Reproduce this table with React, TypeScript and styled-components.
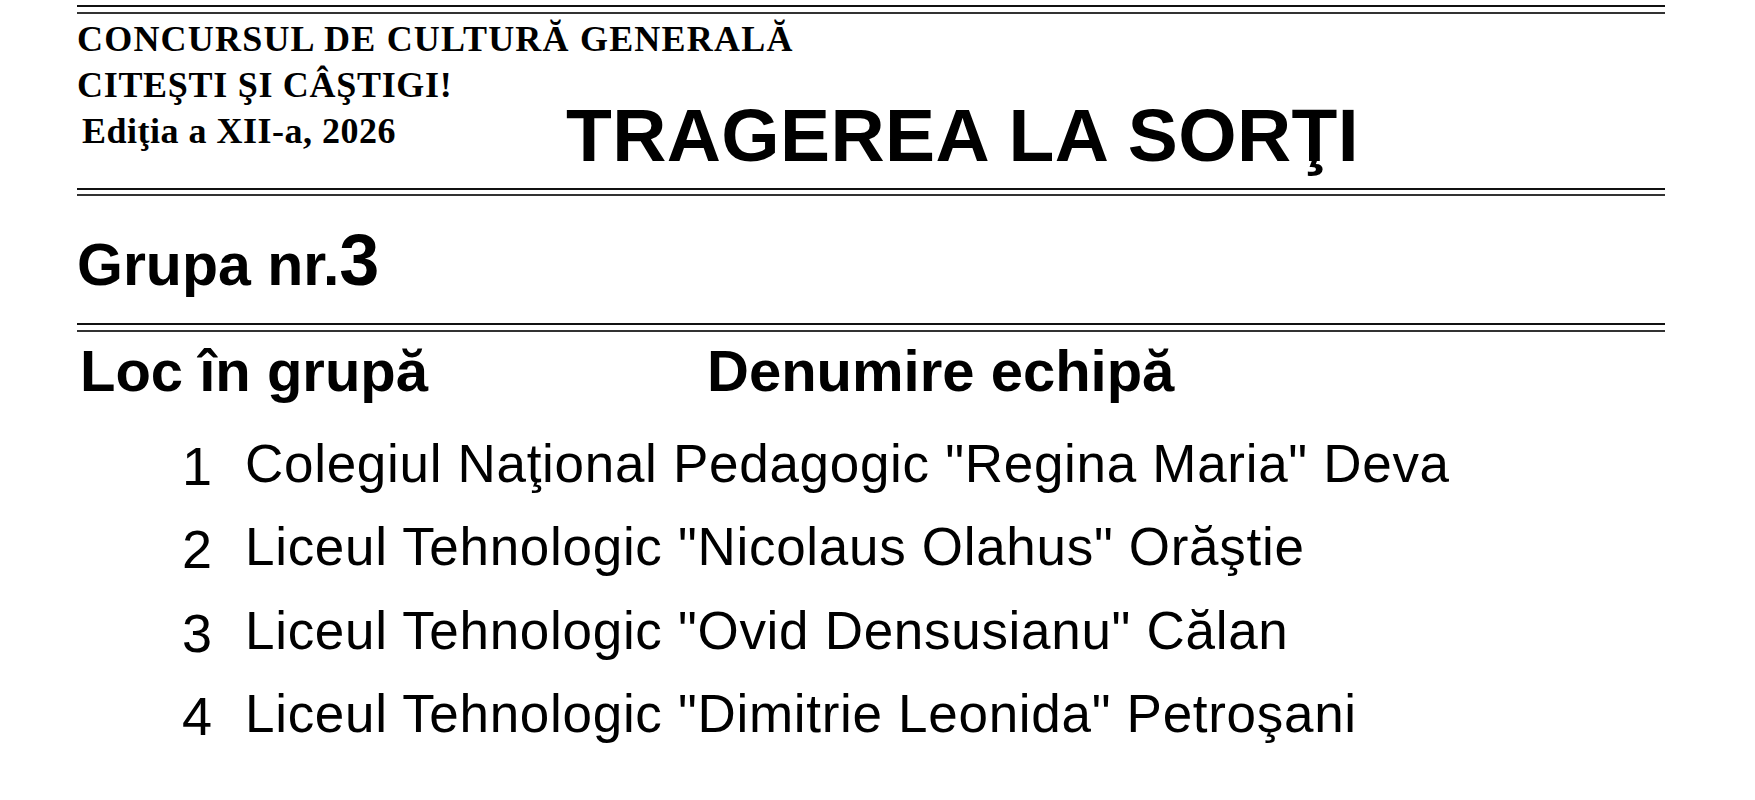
import styled, { createGlobalStyle } from 'styled-components'

const teams = [
  'Colegiul Naţional Pedagogic "Regina Maria" Deva',
  'Liceul Tehnologic "Nicolaus Olahus" Orăştie',
  'Liceul Tehnologic "Ovid Densusianu" Călan',
  'Liceul Tehnologic "Dimitrie Leonida" Petroşani'
]

const GlobalStyle = createGlobalStyle`
  body {
    margin: 0;
    background: #fff;
    color: #000;
    font-family: 'Liberation Sans', Arial, sans-serif;
  }
`

const Page = styled.div`
  width: 1588px;
  padding-left: 77px;
  height: 800px;
  overflow: hidden;
`

const DoubleRule = styled.div<{ $top: number; $gap: number }>`
  margin-top: ${(p) => p.$top}px;
  height: ${(p) => p.$gap}px;
  border-top: 2px solid #111;
  border-bottom: 2px solid #333;
`

const Header = styled.div`
  display: flex;
  align-items: flex-start;
  padding-top: 2px;
`

const Contest = styled.div`
  width: 489px;
  display: flex;
  flex-direction: column;
`

const ContestLine = styled.div<{ $indent?: number; $spacing?: number }>`
  font-family: 'Liberation Serif', 'Times New Roman', serif;
  font-weight: 700;
  font-size: 36px;
  line-height: 46px;
  letter-spacing: ${(p) => p.$spacing ?? 0.7}px;
  white-space: nowrap;
  padding-left: ${(p) => p.$indent ?? 0}px;
`

const Title = styled.h1`
  margin: 82px 0 0;
  font-size: 75px;
  line-height: 75px;
  font-weight: 700;
  letter-spacing: 0.4px;
  white-space: nowrap;
`

const GroupTitle = styled.div`
  display: flex;
  align-items: baseline;
  margin-top: 28px;
  font-weight: 700;
`

const GroupLabel = styled.span`
  font-size: 59px;
  line-height: 59px;
`

const GroupNumber = styled.span`
  font-size: 72px;
  line-height: 72px;
`

const Columns = styled.div`
  display: grid;
  grid-template-columns: 627px auto;
  margin-top: 10px;
  padding-left: 3px;
`

const ColumnHeading = styled.div`
  font-size: 58px;
  line-height: 58px;
  font-weight: 700;
  white-space: nowrap;
`

const TeamList = styled.div`
  margin-top: 22px;
  padding-left: 105px;
  display: flex;
  flex-direction: column;
`

const TeamRow = styled.div`
  display: flex;
  align-items: flex-start;
  gap: 33px;
  height: 83.3px;
`

const Place = styled.span`
  width: 30px;
  margin-top: 3px;
  font-size: 54px;
  line-height: 83px;
`

const TeamName = styled.span`
  font-size: 53px;
  line-height: 83px;
  letter-spacing: 0.7px;
  white-space: nowrap;
`

export default function App() {
  return (
    <>
      <GlobalStyle />
      <Page>
        <DoubleRule $top={5} $gap={5} />
        <Header>
          <Contest>
            <ContestLine $spacing={1.2}>CONCURSUL DE CULTURĂ GENERALĂ</ContestLine>
            <ContestLine>CITEŞTI ŞI CÂŞTIGI!</ContestLine>
            <ContestLine $indent={5} $spacing={0.5}>
              Ediţia a XII-a, 2026
            </ContestLine>
          </Contest>
          <Title>TRAGEREA LA SORŢI</Title>
        </Header>
        <DoubleRule $top={15} $gap={4} />
        <GroupTitle>
          <GroupLabel>Grupa nr.</GroupLabel>
          <GroupNumber>3</GroupNumber>
        </GroupTitle>
        <DoubleRule $top={27} $gap={5} />
        <Columns>
          <ColumnHeading>Loc în grupă</ColumnHeading>
          <ColumnHeading>Denumire echipă</ColumnHeading>
        </Columns>
        <TeamList>
          {teams.map((name, i) => (
            <TeamRow key={i}>
              <Place>{i + 1}</Place>
              <TeamName>{name}</TeamName>
            </TeamRow>
          ))}
        </TeamList>
      </Page>
    </>
  )
}
